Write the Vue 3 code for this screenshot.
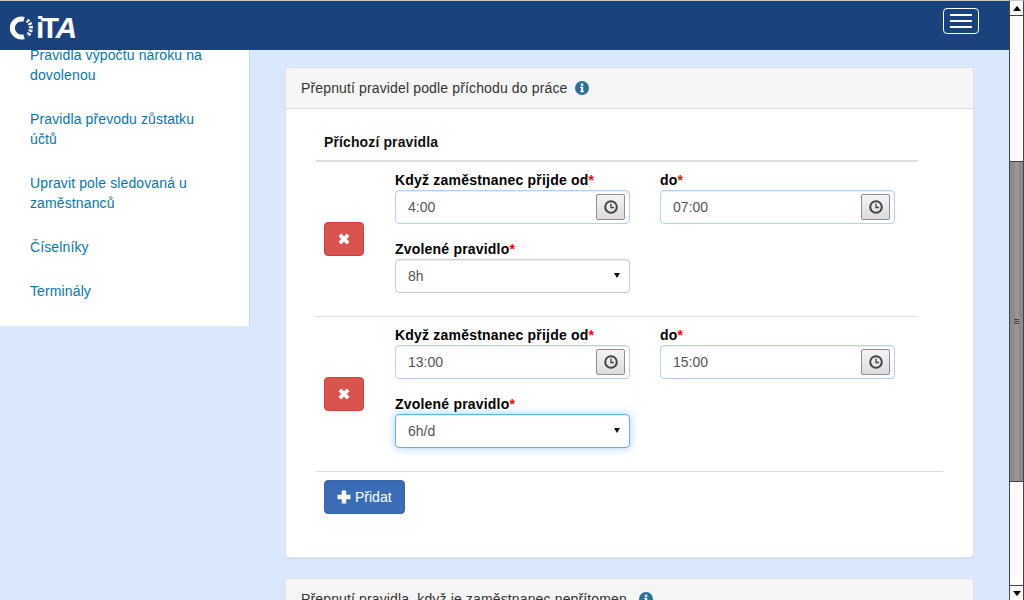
<template>
  <div class="page">
    <div class="window">
      <header class="navbar">
        <div class="logo">
          <svg width="26" height="26" viewBox="0 0 26 26">
            <path d="M16 4.4 A9 9 0 1 0 16 21.6" fill="none" stroke="#fff" stroke-width="5" />
            <path
              d="M19 5.3 A9.5 9.5 0 0 1 19 20.7"
              fill="none"
              stroke="#fff"
              stroke-width="4"
              stroke-dasharray="2.2 1.3"
            />
          </svg>
          <span class="logo-text">iT<em>A</em></span>
        </div>
        <button class="menu-btn">
          <span></span>
          <span></span>
          <span></span>
        </button>
      </header>

      <div class="layout">
        <nav class="sidebar">
          <a v-for="item in menu" :key="item" class="side-link">{{ item }}</a>
        </nav>

        <main class="content">
          <section class="panel">
            <div class="panel-head">
              <span>Přepnutí pravidel podle příchodu do práce</span>
              <svg class="info" width="14" height="14" viewBox="0 0 14 14">
                <circle cx="7" cy="7" r="7" fill="#2b6f9f" />
                <rect x="5.9" y="2.6" width="2.4" height="2.2" fill="#fff" />
                <path d="M5.2 5.8H8.2V10H9.1V11.3H5.2V10H6V7.1H5.2Z" fill="#fff" />
              </svg>
            </div>
            <div class="panel-body">
              <div class="rules-title">Příchozí pravidla</div>
              <div v-for="rule in rules" :key="rule.from" class="rule">
                <button class="btn-remove">
                  <svg width="12" height="12" viewBox="0 0 12 12">
                    <path d="M3.2 .5 6 3.3 8.8 .5 11.5 3.2 8.7 6 11.5 8.8 8.8 11.5 6 8.7 3.2 11.5 .5 8.8 3.3 6 .5 3.2Z" fill="#fff" />
                  </svg>
                </button>
                <div class="fields">
                  <div class="field">
                    <label>Když zaměstnanec přijde od<i>*</i></label>
                    <div class="time">
                      <input class="control valid" :value="rule.from" />
                      <button class="clock-btn">
                        <svg width="14" height="14" viewBox="0 0 14 14">
                          <circle cx="7" cy="7" r="5.8" fill="none" stroke="#444" stroke-width="2" />
                          <path d="M7 3.5V7.5H10" fill="none" stroke="#444" stroke-width="1.3" />
                        </svg>
                      </button>
                    </div>
                  </div>
                  <div class="field">
                    <label>do<i>*</i></label>
                    <div class="time">
                      <input class="control valid" :value="rule.to" />
                      <button class="clock-btn">
                        <svg width="14" height="14" viewBox="0 0 14 14">
                          <circle cx="7" cy="7" r="5.8" fill="none" stroke="#444" stroke-width="2" />
                          <path d="M7 3.5V7.5H10" fill="none" stroke="#444" stroke-width="1.3" />
                        </svg>
                      </button>
                    </div>
                  </div>
                  <div class="field">
                    <label>Zvolené pravidlo<i>*</i></label>
                    <div class="select-wrap">
                      <select class="control" :class="{ focused: rule.focused }">
                        <option>{{ rule.value }}</option>
                      </select>
                      <span class="arrow"></span>
                    </div>
                  </div>
                </div>
              </div>
              <div class="rules-foot">
                <button class="btn-add">
                  <svg width="14" height="14" viewBox="0 0 14 14">
                    <path d="M4.8 .5H9.2V4.8H13.5V9.2H9.2V13.5H4.8V9.2H.5V4.8H4.8Z" fill="#fff" />
                  </svg>
                  Přidat
                </button>
              </div>
            </div>
          </section>

          <section class="panel">
            <div class="panel-head wide">
              <span>Přepnutí pravidla, když je zaměstnanec nepřítomen</span>
              <svg class="info" width="14" height="14" viewBox="0 0 14 14">
                <circle cx="7" cy="7" r="7" fill="#2b6f9f" />
                <rect x="5.9" y="2.6" width="2.4" height="2.2" fill="#fff" />
                <path d="M5.2 5.8H8.2V10H9.1V11.3H5.2V10H6V7.1H5.2Z" fill="#fff" />
              </svg>
            </div>
          </section>
        </main>
      </div>
    </div>

    <div class="scrollbar">
      <div class="scroll-btn"><span class="tri up"></span></div>
      <div class="scroll-track">
        <div class="thumb">
          <span></span>
          <span></span>
          <span></span>
        </div>
      </div>
      <div class="scroll-btn bottom"><span class="tri down"></span></div>
    </div>
  </div>
</template>

<script setup>
const menu = [
  "Pravidla výpočtu nároku na dovolenou",
  "Pravidla převodu zůstatku účtů",
  "Upravit pole sledovaná u zaměstnanců",
  "Číselníky",
  "Terminály",
];

const rules = [
  { from: "4:00", to: "07:00", value: "8h", focused: false },
  { from: "13:00", to: "15:00", value: "6h/d", focused: true },
];
</script>

<style>
html,
body {
  margin: 0;
  height: 100%;
  overflow: hidden;
}
</style>

<style scoped>
.page {
  display: flex;
  height: 600px;
  font-family: "Liberation Sans", Arial, sans-serif;
  font-size: 14px;
  line-height: 20px;
  color: #333;
  background: #d9e8fd;
}
.window {
  flex: 1;
  min-width: 0;
  display: flex;
  flex-direction: column;
  overflow: hidden;
}

.navbar {
  position: relative;
  z-index: 2;
  flex: none;
  height: 49px;
  border-top: 1px solid #c9c9c9;
  background: #1a437e;
  display: flex;
  align-items: center;
  justify-content: space-between;
  padding-right: 30px;
}
.logo {
  display: flex;
  align-items: center;
  gap: 2px;
  margin-left: 8px;
  margin-top: 5px;
}
.logo-text {
  font-size: 30px;
  line-height: 26px;
  font-weight: 700;
  letter-spacing: -3.6px;
  color: #fff;
}
.logo-text em {
  font-style: italic;
}
.menu-btn {
  width: 36px;
  height: 26px;
  padding: 0;
  margin-top: -9px;
  border: 1px solid #fff;
  border-radius: 4px;
  background: transparent;
  display: flex;
  flex-direction: column;
  align-items: center;
  justify-content: center;
  gap: 4px;
}
.menu-btn span {
  width: 22px;
  height: 2px;
  background: #fff;
}

.layout {
  flex: 1;
  min-height: 0;
  display: flex;
  align-items: flex-start;
  margin-top: -5px;
}
.sidebar {
  flex: none;
  width: 189px;
  padding: 0 30px 25px;
  background: #fff;
  border-right: 1px solid #c9d3e2;
  display: flex;
  flex-direction: column;
  gap: 24px;
  letter-spacing: 0.12px;
}
.side-link {
  color: #0877b0;
}

.content {
  flex: 1;
  min-width: 0;
  padding: 22px 35px 0;
}
.panel {
  background: #fff;
  border: 1px solid #e1e1e1;
  border-radius: 4px;
  box-shadow: 0 1px 1px rgba(0, 0, 0, 0.05);
  margin-bottom: 20px;
}
.panel-head {
  height: 20px;
  padding: 10px 15px;
  background: #f5f5f5;
  border-bottom: 1px solid #ddd;
  border-radius: 3px 3px 0 0;
  display: flex;
  align-items: center;
  gap: 8px;
  letter-spacing: 0.14px;
}
.panel-head.wide {
  gap: 12px;
}
.info {
  flex: none;
}
.panel-body {
  padding: 23px 30px 43px;
}

.rules-title {
  width: 594px;
  padding: 0 0 8px 8px;
  font-weight: 700;
  letter-spacing: 0.12px;
  color: #111;
  border-bottom: 2px solid #ddd;
}
.rule {
  width: 602px;
  height: 154px;
  display: flex;
  align-items: center;
  box-sizing: border-box;
  padding-left: 8px;
}
.rule + .rule {
  height: 155px;
  border-top: 1px solid #ddd;
}
.btn-remove {
  flex: none;
  width: 40px;
  height: 34px;
  margin-right: 31px;
  padding: 0;
  display: flex;
  align-items: center;
  justify-content: center;
  background: #d9534f;
  border: 1px solid #d43f3a;
  border-radius: 4px;
}
.fields {
  display: grid;
  grid-template-columns: 235px 235px;
  column-gap: 30px;
  row-gap: 14px;
  padding: 7px 0 23px;
}
.field label {
  display: block;
  padding-top: 1px;
  font-weight: 700;
  letter-spacing: 0.2px;
  color: #000;
}
.field i {
  font-style: normal;
  color: #f00;
}
.time,
.select-wrap {
  position: relative;
}
.control {
  display: block;
  box-sizing: border-box;
  width: 100%;
  height: 34px;
  padding: 6px 12px;
  font: inherit;
  color: #555;
  background: #fff;
  border: 1px solid #ccc;
  border-radius: 4px;
  outline: none;
  appearance: none;
  box-shadow: inset 0 1px 1px rgba(0, 0, 0, 0.075);
}
.control.valid {
  border-color: #b3d0f5;
}
.control.focused {
  border-color: #66afe9;
  box-shadow: inset 0 1px 1px rgba(0, 0, 0, 0.075), 0 0 8px rgba(102, 175, 233, 0.6);
}
.clock-btn {
  position: absolute;
  top: 4px;
  right: 5px;
  width: 29px;
  height: 26px;
  padding: 0;
  display: flex;
  align-items: center;
  justify-content: center;
  background: linear-gradient(#f4f4f4, #dcdcdc);
  border: 1px solid #8f8f8f;
  border-radius: 2px;
}
.arrow {
  position: absolute;
  top: 14px;
  right: 10px;
  width: 0;
  height: 0;
  border-left: 3.5px solid transparent;
  border-right: 3.5px solid transparent;
  border-top: 5px solid #111;
}

.rules-foot {
  width: 619px;
  padding: 8px 0 0 8px;
  border-top: 1px solid #ddd;
}
.btn-add {
  height: 34px;
  padding: 0 12px;
  display: flex;
  align-items: center;
  gap: 4px;
  font: inherit;
  color: #fff;
  background: #3a6db5;
  border: 1px solid #3566aa;
  border-radius: 4px;
}

.scrollbar {
  flex: none;
  width: 13px;
  height: 599px;
  border-top: 1px solid #c9c9c9;
  border-left: 1px solid #444;
  border-right: 1px solid #444;
  background: #fcfcfc;
  display: flex;
  flex-direction: column;
}
.scroll-btn {
  flex: none;
  height: 14px;
  display: flex;
  align-items: center;
  justify-content: center;
  border-bottom: 1px solid #444;
}
.scroll-btn.bottom {
  border-bottom: 0;
  border-top: 1px solid #444;
}
.tri {
  width: 0;
  height: 0;
  border-left: 4px solid transparent;
  border-right: 4px solid transparent;
}
.tri.up {
  border-bottom: 5px solid #000;
}
.tri.down {
  border-top: 5px solid #000;
}
.scroll-track {
  flex: 1;
  padding-top: 145px;
}
.thumb {
  box-sizing: border-box;
  height: 321px;
  display: flex;
  flex-direction: column;
  align-items: center;
  justify-content: center;
  gap: 1px;
  border-top: 1px solid #444;
  border-bottom: 1px solid #444;
  background: linear-gradient(to right, #8c8c8c 0 40%, #979797 40% 70%, #8a8a8a 70%);
}
.thumb span {
  width: 5px;
  height: 1px;
  background: #444;
}
</style>
